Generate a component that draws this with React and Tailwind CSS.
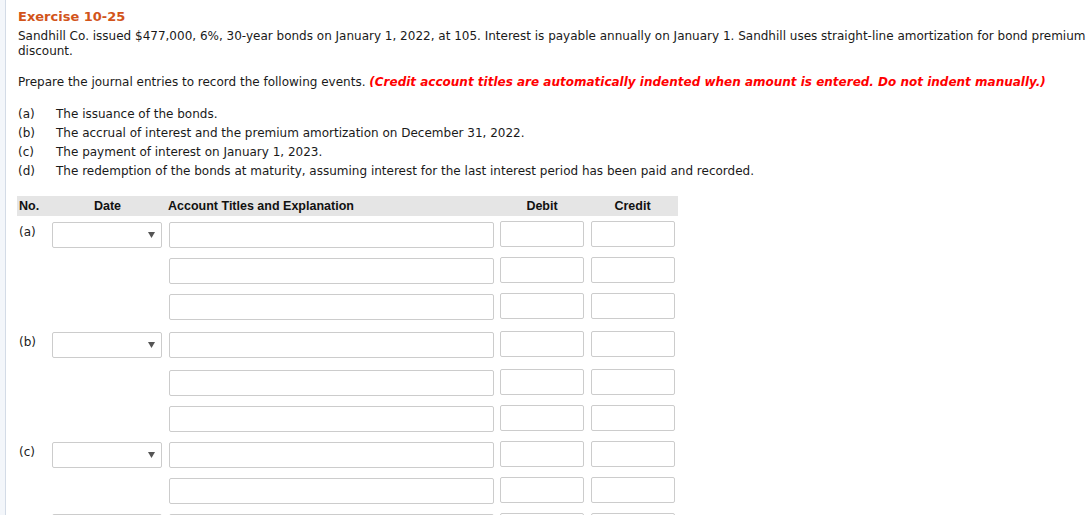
import React from "react";

const body = { fontFamily: "Verdana, 'DejaVu Sans', sans-serif" };
const head = { fontFamily: "Tahoma, 'Liberation Sans', Arial, sans-serif" };

function Arrow() {
  return (
    <svg width="7" height="6" viewBox="0 0 7 6" className="block">
      <path d="M0 0 L7 0 L3.5 6 Z" fill="#555" />
    </svg>
  );
}

function Row({ label, top, first }) {
  return (
    <div className={`flex items-start -ml-px ${top}`}>
      <div className="w-[35px] shrink-0 pl-[2px] pt-[3px] h-[26px]">{label}</div>
      <div className="w-[110px] shrink-0 h-[26px]">
        {first && (
          <div className="w-[110px] h-[26px] border border-[#cccccc] rounded-[2px] flex items-center justify-end pr-[6px] bg-white">
            <Arrow />
          </div>
        )}
      </div>
      <div className="ml-[7px] w-[325px] h-[26px] border border-[#cccccc] rounded-[2px] bg-white" />
      <div className="ml-[6px] -mt-px w-[84px] h-[26px] border border-[#cccccc] rounded-[2px] bg-white" />
      <div className="ml-[7px] -mt-px w-[84px] h-[26px] border border-[#cccccc] rounded-[2px] bg-white" />
    </div>
  );
}

export default function App() {
  return (
    <div className="w-[1087px] h-[515px] overflow-hidden flex bg-white">
      <div className="w-[6px] shrink-0 bg-[#f3f6fa] border-r border-[#d3dbe6]" />
      <div
        className="pl-[12px] pt-[9px] w-[1142px] shrink-0 text-[12px] leading-[15px] text-[#1a1a1a]"
        style={body}
      >
        <div className="font-bold text-[13px] text-[#d2541a] h-[15px] mb-[5px]">Exercise 10-25</div>
        <p>
          Sandhill Co. issued $477,000, 6%, 30-year bonds on January 1, 2022, at 105. Interest is payable
          annually on January 1. Sandhill uses straight-line amortization for bond premium or discount.
        </p>
        <p className="mt-[16px]">
          Prepare the journal entries to record the following events.{" "}
          <span className="text-[#ff0000] font-bold italic">
            (Credit account titles are automatically indented when amount is entered. Do not indent manually.)
          </span>
        </p>
        <div className="mt-[15px] leading-[19px]">
          {[
            ["(a)", "The issuance of the bonds."],
            ["(b)", "The accrual of interest and the premium amortization on December 31, 2022."],
            ["(c)", "The payment of interest on January 1, 2023."],
            [
              "(d)",
              "The redemption of the bonds at maturity, assuming interest for the last interest period has been paid and recorded.",
            ],
          ].map(([l, t]) => (
            <div key={l} className="flex">
              <div className="w-[38px] shrink-0">{l}</div>
              <div>{t}</div>
            </div>
          ))}
        </div>

        <div
          className="mt-[15px] -ml-px w-[661px] h-[20px] bg-[#e5e5e5] flex items-center font-bold text-[12.5px] text-[#111]"
          style={head}
        >
          <div className="w-[33px] pl-[2px]">No.</div>
          <div className="w-[115px] text-center">Date</div>
          <div className="w-[332px] pl-[3px]">Account Titles and Explanation</div>
          <div className="w-[90px] text-center">Debit</div>
          <div className="w-[91px] text-center">Credit</div>
        </div>

        <Row label="(a)" top="mt-[6px]" first />
        <Row top="mt-[10px]" />
        <Row top="mt-[10px]" />
        <Row label="(b)" top="mt-[12px]" first />
        <Row top="mt-[12px]" />
        <Row top="mt-[10px]" />
        <Row label="(c)" top="mt-[10px]" first />
        <Row top="mt-[10px]" />
        <Row label="" top="mt-[10px]" first />
      </div>
    </div>
  );
}
